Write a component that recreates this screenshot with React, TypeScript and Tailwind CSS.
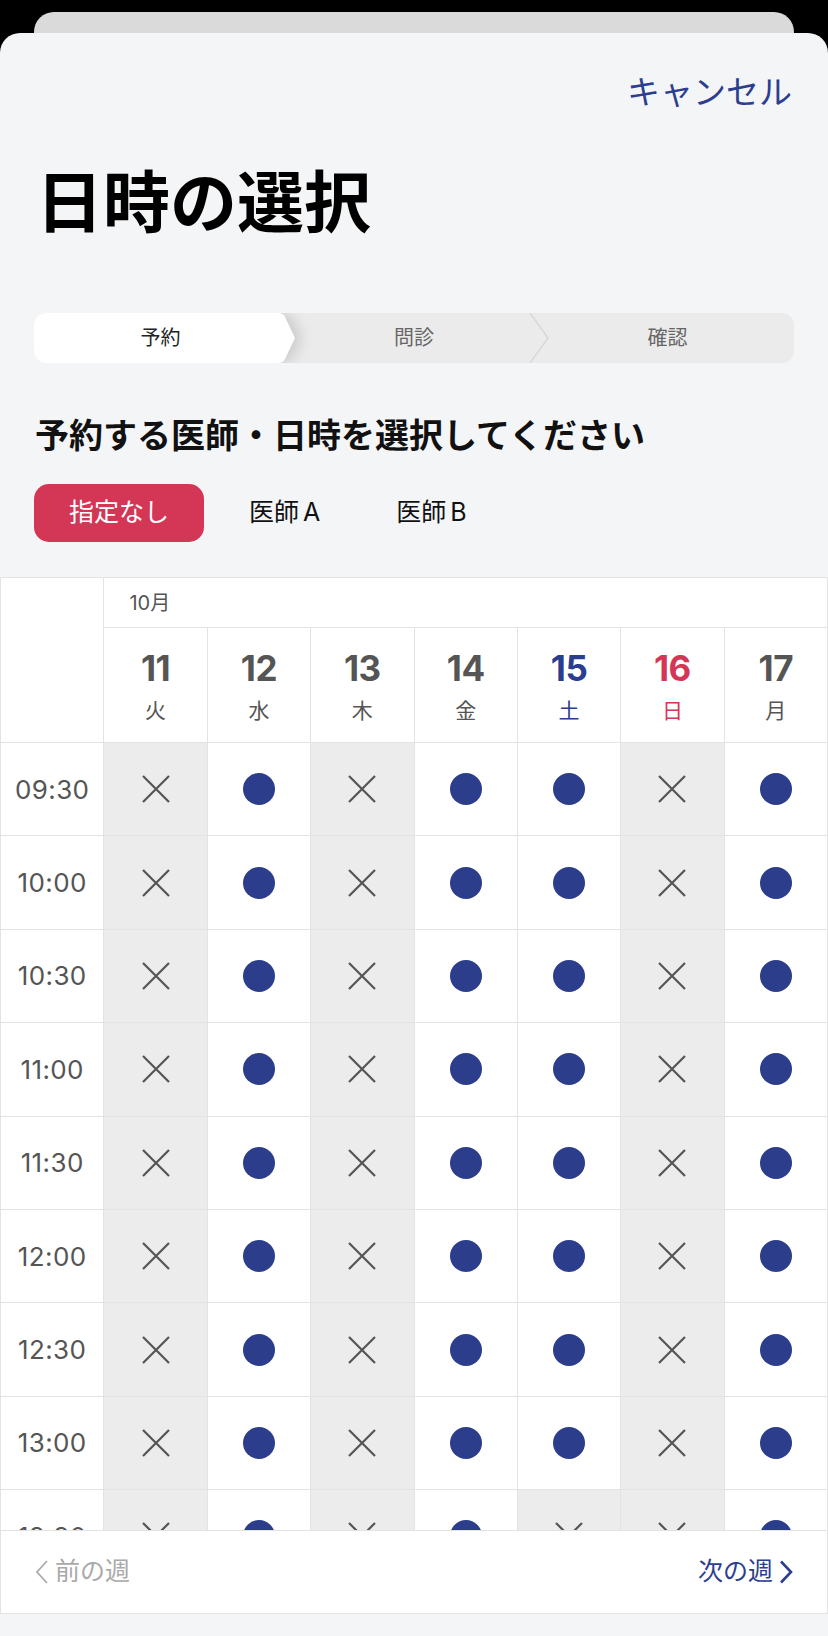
import React from 'react'

const days = [
  { d: '11', w: '火', tone: 'text-[#555555]' },
  { d: '12', w: '水', tone: 'text-[#555555]' },
  { d: '13', w: '木', tone: 'text-[#555555]' },
  { d: '14', w: '金', tone: 'text-[#555555]' },
  { d: '15', w: '土', tone: 'text-[#2b3d8f]' },
  { d: '16', w: '日', tone: 'text-[#d43656]' },
  { d: '17', w: '月', tone: 'text-[#555555]' },
]

const times = ['09:30', '10:00', '10:30', '11:00', '11:30', '12:00', '12:30', '13:00', '13:30', '14:00']

// closed days are tue, thu and sun; 13:30 on saturday is full too
const isClosed = (row: number, col: number) =>
  col === 0 || col === 2 || col === 5 || (row >= 8 && col === 4)

function Cross() {
  return (
    <svg width="28" height="28" viewBox="0 0 28 28">
      <path d="M1 1 L27 27 M27 1 L1 27" stroke="#555555" strokeWidth="2.2" fill="none" />
    </svg>
  )
}

function Stepper() {
  return (
    <div className="relative mx-[34px] mt-[70px] flex h-[50px] overflow-hidden rounded-[12px] bg-[#ebebeb] text-[20px] leading-[50px]">
      <div className="relative w-[253px] shrink-0">
        <svg
          className="absolute top-0 left-0 drop-shadow-[6px_0_7px_rgba(0,0,0,0.14)]"
          width="276"
          height="50"
          viewBox="0 0 276 50"
        >
          <path d="M0 0 H244 Q249 0 251 4 L261 25 L251 46 Q249 50 244 50 H0 Z" fill="#ffffff" />
        </svg>
        <span className="relative block text-center text-[#222222]">予約</span>
      </div>
      <div className="w-[254px] shrink-0 text-center text-[#666666]">問診</div>
      <div className="relative flex-1 text-center text-[#666666]">
        <svg className="absolute top-0 left-[-12px]" width="22" height="50" viewBox="0 0 22 50">
          <path d="M1 0 L19 25 L1 50" stroke="#d9d9d9" strokeWidth="1.6" fill="none" />
        </svg>
        確認
      </div>
    </div>
  )
}

export default function App() {
  return (
    <div className="flex h-[1636px] flex-col overflow-hidden bg-black font-[Inter,'Noto_Sans_CJK_JP',sans-serif]">
      <div className="mx-[34px] mt-[12px] h-[21px] shrink-0 rounded-t-[20px] bg-[#dadada]" />

      <div className="flex min-h-0 flex-1 flex-col rounded-t-[20px] bg-[#f4f5f7]">
        <div className="flex justify-end pt-[39px] pr-[36px]">
          <span className="text-[33px] leading-[40px] text-[#2c3e8f]">キャンセル</span>
        </div>

        <h1 className="mt-[51px] pl-[36px] text-[67px] leading-[80px] font-bold text-black">日時の選択</h1>

        <Stepper />

        <h2 className="mt-[51px] pl-[35px] text-[34px] leading-[44px] font-bold text-[#111111]">
          予約する医師・日時を選択してください
        </h2>

        <div className="mt-[26px] flex items-center pl-[34px] text-[25px]">
          <button className="h-[58px] rounded-[15px] bg-[#d43656] px-[35px] text-white">指定なし</button>
          <button className="ml-[45px] text-[#111111]">
            医師<span className="ml-[4px]">A</span>
          </button>
          <button className="ml-[76px] text-[#111111]">
            医師<span className="ml-[4px]">B</span>
          </button>
        </div>

        <div className="mt-[35px] min-h-0 flex-1 overflow-hidden border-t border-r border-[#e3e3e3] bg-white">
          <div className="grid grid-cols-8">
            <div className="row-span-2 border-b border-l border-[#e3e3e3]" />
            <div className="col-span-7 flex h-[50px] items-center border-b border-l border-[#e3e3e3] pl-[25px] text-[20px] text-[#555555]">
              10月
            </div>
            {days.map((day) => (
              <div
                key={day.d}
                className={`flex h-[115px] flex-col items-center border-b border-l border-[#e3e3e3] pt-[20px] ${day.tone}`}
              >
                <span className="text-[35px] leading-[40px] font-bold tracking-[-0.5px]">{day.d}</span>
                <span className="mt-[10px] text-[21px] leading-[26px]">{day.w}</span>
              </div>
            ))}

            {times.map((t, row) => (
              <React.Fragment key={t}>
                <div className="flex h-[93.4px] items-center justify-center border-b border-l border-[#e3e3e3] text-[26px] tracking-[0.4px] text-[#555555]">
                  {t}
                </div>
                {days.map((day, col) => (
                  <div
                    key={day.d}
                    className={`flex h-[93.4px] items-center justify-center border-b border-l border-[#e3e3e3] ${
                      isClosed(row, col) ? 'bg-[#ececec]' : 'bg-white'
                    }`}
                  >
                    {isClosed(row, col) ? <Cross /> : <div className="h-[32px] w-[32px] rounded-full bg-[#2b3d8b]" />}
                  </div>
                ))}
              </React.Fragment>
            ))}
          </div>
        </div>

        <div className="flex h-[84px] shrink-0 items-center justify-between border border-[#e3e3e3] bg-white px-[33px] text-[25px]">
          <button className="flex items-center gap-[5px] text-[#aaaaaa]">
            <svg width="16" height="24" viewBox="0 0 16 24">
              <path d="M13 1 L3 12 L13 23" stroke="#aaaaaa" strokeWidth="1.8" fill="none" />
            </svg>
            前の週
          </button>
          <button className="flex items-center gap-[5px] text-[#2c3e8f]">
            次の週
            <svg width="16" height="24" viewBox="0 0 16 24">
              <path d="M3 1.5 L13 12 L3 22.5" stroke="#2c3e8f" strokeWidth="2.6" fill="none" />
            </svg>
          </button>
        </div>
        <div className="h-[22px] shrink-0" />
      </div>
    </div>
  )
}
